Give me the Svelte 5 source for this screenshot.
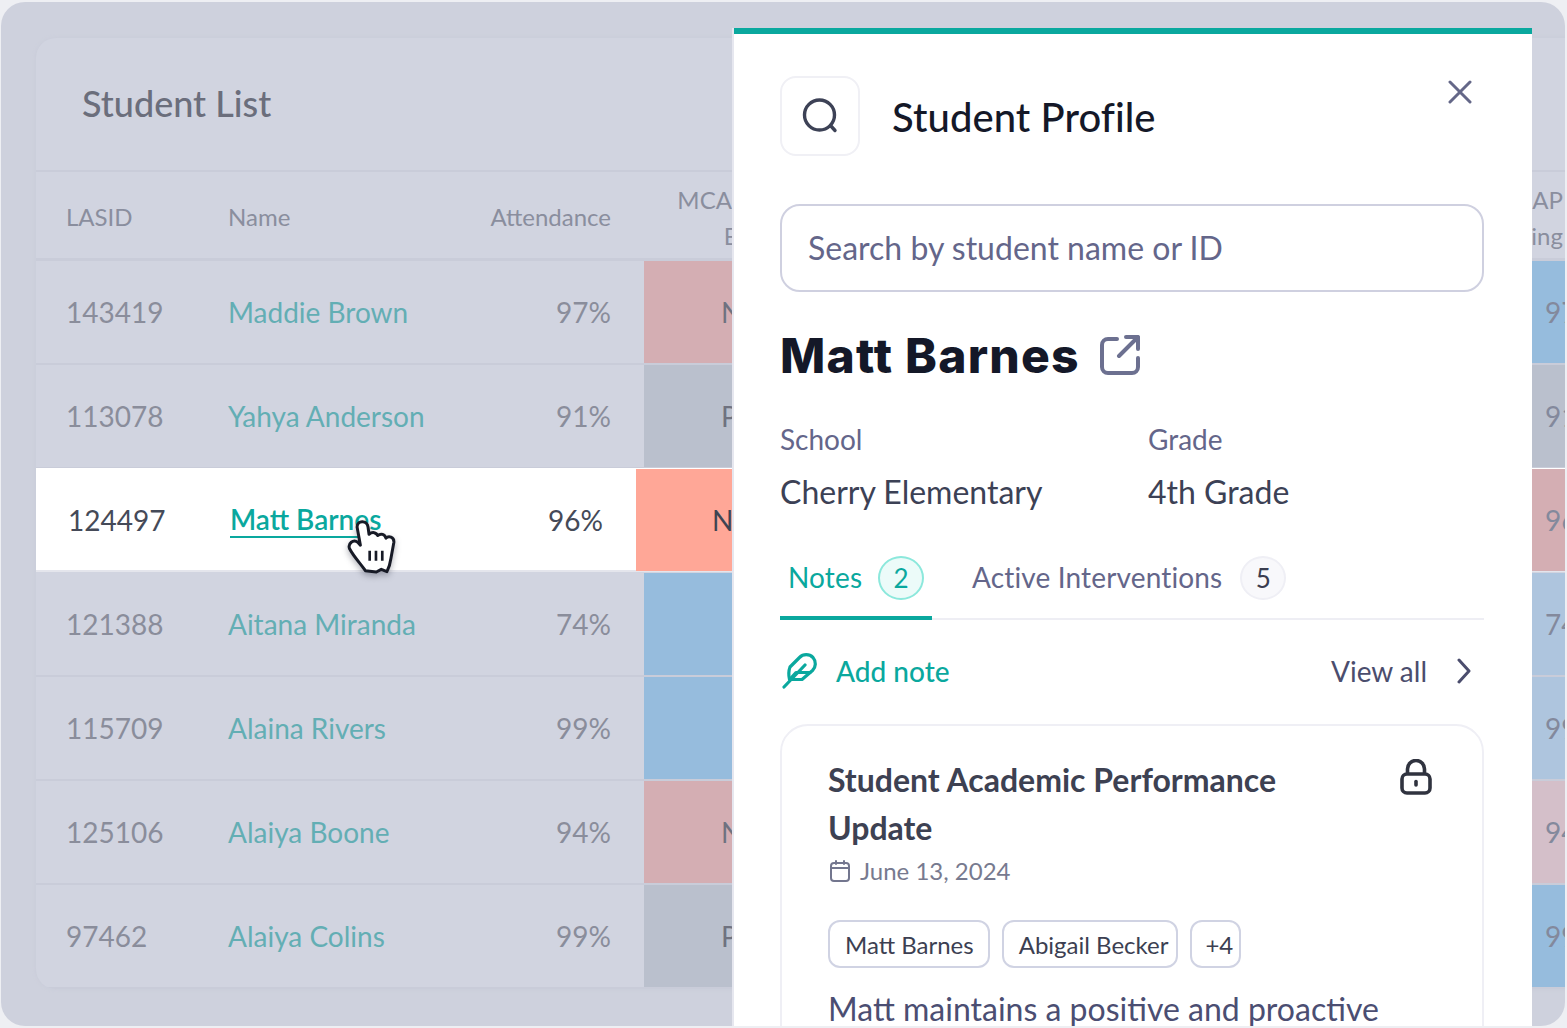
<script>
  const students = [
    { id: '143419', name: 'Maddie Brown', att: '97%', mark: 'NM', tone: 'red', score: '97', end: 'blue' },
    { id: '113078', name: 'Yahya Anderson', att: '91%', mark: 'PM', tone: 'grey', score: '91', end: 'grey' },
    { id: '124497', name: 'Matt Barnes', att: '96%', mark: 'NM', tone: 'hot', score: '96', end: 'red', active: true },
    { id: '121388', name: 'Aitana Miranda', att: '74%', mark: '', tone: 'blue', score: '74', end: 'pale' },
    { id: '115709', name: 'Alaina Rivers', att: '99%', mark: '', tone: 'blue', score: '99', end: 'pale' },
    { id: '125106', name: 'Alaiya Boone', att: '94%', mark: 'NM', tone: 'red', score: '94', end: 'pink' },
    { id: '97462', name: 'Alaiya Colins', att: '99%', mark: 'PM', tone: 'grey', score: '99', end: 'blue' }
  ];
</script>

<div class="frame">
  <div class="window">
    <section class="card">
      <h2 class="card-title">Student List</h2>
      <div class="row head">
        <div>LASID</div>
        <div>Name</div>
        <div class="num">Attendance</div>
        <div class="head-mca">MCA Results<br />ELA</div>
        <div class="head-map">MAP<br />Reading</div>
      </div>
      {#each students as s (s.id)}
        <div class="row" class:active={s.active}>
          <div>{s.id}</div>
          <div><span class="name">{s.name}</span></div>
          <div class="num">{s.att}</div>
          <div class="mark {s.tone}">{s.mark}</div>
          <div class="score {s.end}">{s.score}</div>
        </div>
      {/each}
    </section>

    <svg class="cursor" viewBox="440 170 150 175" width="50" height="58">
      <path d="M470 200C470 180 500 178 503 200L506 222C516 214 528 216 532 226C542 218 554 222 557 234C565 226 582 230 581 246L572 295C570 310 565 325 560 335L543 328L528 336L495 332C480 310 460 290 447 265C442 250 458 236 472 246L480 255Z" fill="#fff" stroke="#171a26" stroke-width="9" stroke-linejoin="round" />
      <path d="M508 272V302M527 272V302M546 272V302" fill="none" stroke="#171a26" stroke-width="8" />
    </svg>

    <aside class="modal">
      <header class="modal-head">
        <div class="icon-box">
          <svg viewBox="0 0 40 40" width="40" height="40" fill="none" stroke="#3d4256" stroke-width="3.4" stroke-linecap="round">
            <circle cx="19.5" cy="19" r="15" />
            <path d="M30.5 29.5L35 34.5" />
          </svg>
        </div>
        <h1>Student Profile</h1>
        <svg class="close" viewBox="0 0 24 24" width="24" height="24" fill="none" stroke="#646788" stroke-width="3" stroke-linecap="round">
          <path d="M2 2L22 22M22 2L2 22" />
        </svg>
      </header>

      <div class="search">Search by student name or ID</div>

      <div class="person">
        <span class="person-name">Matt Barnes</span>
        <svg viewBox="0 0 40 40" width="40" height="40" fill="none" stroke="#6c7090" stroke-width="4" stroke-linecap="round" stroke-linejoin="round">
          <path d="M17 4H8a6 6 0 0 0-6 6V32a6 6 0 0 0 6 6H32a6 6 0 0 0 6-6V23" />
          <path d="M19 21L38 2M26 2H38V14" />
        </svg>
      </div>

      <dl class="facts">
        <div><dt>School</dt><dd>Cherry Elementary</dd></div>
        <div><dt>Grade</dt><dd>4th Grade</dd></div>
      </dl>

      <div class="tabs">
        <div class="tab on">Notes <span class="badge">2</span></div>
        <div class="tab">Active Interventions <span class="badge">5</span></div>
      </div>

      <div class="actions">
        <div class="add">
          <svg viewBox="0 0 36 36" width="36" height="36" fill="none" stroke="#0aa89e" stroke-width="3.2" stroke-linecap="round" stroke-linejoin="round">
            <path d="M31 4.500a9.500 9.500 0 0 0-13.500 0L8 14c-1.500 4-1.500 8-.5 12.500H20l10.500-9a9.500 9.500 0 0 0 .5-13z" />
            <path d="M2 34L23 12M9 25L14 19.500H28" />
          </svg>
          Add note
        </div>
        <div class="view">
          View all
          <svg viewBox="0 0 14 26" width="14" height="26" fill="none" stroke="#4b4d6d" stroke-width="3" stroke-linecap="round" stroke-linejoin="round">
            <path d="M2 2L12 13L2 24" />
          </svg>
        </div>
      </div>

      <article class="note">
        <div class="note-top">
          <h3>Student Academic Performance Update</h3>
          <svg viewBox="0 0 32 36" width="32" height="36" fill="none" stroke="#30333f" stroke-width="3.600">
            <rect x="2" y="15" width="28" height="19" rx="5" />
            <path d="M7.500 15V10a8.500 8.500 0 0 1 17 0V15" />
            <path d="M16 22.500V26" stroke-linecap="round" />
          </svg>
        </div>
        <div class="date">
          <svg viewBox="0 0 20 22" width="20" height="22" fill="none" stroke="#73768e" stroke-width="2" stroke-linecap="round">
            <rect x="1" y="3" width="18" height="18" rx="3" />
            <path d="M1 8H19M6 1V4M14 1V4" />
          </svg>
          June 13, 2024
        </div>
        <div class="chips">
          <span class="chip">Matt Barnes</span>
          <span class="chip tight">Abigail Becker</span>
          <span class="chip more">+4</span>
        </div>
        <p>Matt maintains a positive and proactive</p>
      </article>
    </aside>
  </div>
</div>

<style>
  :global(body) {
    margin: 0;
    background: #eeeff3;
    font-family: Lato, "Liberation Sans", sans-serif;
    overflow: hidden;
  }

  .frame {
    box-sizing: border-box;
    width: 1567px;
    height: 1028px;
    padding: 2px 2px 2px 1px;
    background: #eeeff3;
  }

  .window {
    position: relative;
    height: 1024px;
    overflow: hidden;
    border-radius: 24px;
    background: #ced1dd;
  }

  .card {
    width: 1600px;
    margin: 36px 0 0 35px;
    border-radius: 20px;
    background: #d1d4e0;
    box-shadow: 0 0 4px #c8cbd8;
    overflow: hidden;
  }

  .card-title {
    box-sizing: border-box;
    height: 134px;
    margin: 0;
    padding: 43px 46px 0;
    font-size: 36px;
    line-height: 44px;
    font-weight: 500;
    color: #6b6e7c;
    border-bottom: 2px solid #c9ccd9;
  }

  .row {
    display: grid;
    grid-template-columns: 162px 222px 161px 921px 91px;
    align-items: center;
    box-sizing: border-box;
    height: 104px;
    padding-left: 30px;
    font-size: 28px;
    color: #8a8d9b;
    border-bottom: 2px solid #c9ccd9;
  }

  .row > div {
    white-space: nowrap;
  }

  .head {
    height: 89px;
    padding-top: 2px;
    font-size: 24px;
    color: #8a8e9e;
    border-bottom-width: 3px;
  }

  .num {
    text-align: right;
  }

  .head-mca {
    width: 202px;
    margin: 4px 0 0 33px;
    text-align: center;
    line-height: 36px;
  }

  .head-map {
    margin: 4px 60px 0 -60px;
    text-align: right;
    line-height: 36px;
  }

  .name {
    color: #63aeb4;
  }

  .mark,
  .score {
    display: flex;
    align-items: center;
    height: 102px;
    margin-left: 33px;
    padding-left: 77px;
    color: #6f7280;
  }

  .score {
    box-sizing: border-box;
    width: 34px;
    margin-left: 0;
    padding-left: 13px;
    overflow: hidden;
    color: #83899c;
  }

  .red { background: #d4aeb3; }
  .grey { background: #bac0cd; }
  .blue { background: #96bcdd; }
  .pale { background: #aec5de; }
  .pink { background: #d4bfc9; }
  .hot { background: #ffa797; }

  .row.active {
    grid-template-columns: 162px 223px 150px 929px 91px;
    margin: -1px 0 1px;
    padding: 1px 0 0 32px;
    background: #fff;
    color: #454a58;
    border-bottom-color: #e4e5ec;
  }

  .active .mark {
    color: #3f4452;
    padding-left: 76px;
  }

  .active .score {
    color: #83899c;
  }

  .active .name {
    display: inline-block;
    padding-bottom: 1px;
    font-weight: 600;
    color: #0aa89e;
    line-height: 32px;
    border-bottom: 2px solid #0aa89e;
  }

  .cursor {
    position: absolute;
    left: 346px;
    top: 515px;
    filter: drop-shadow(0 3px 3px rgba(40, 44, 60, 0.35));
  }

  .modal {
    position: absolute;
    left: 733px;
    top: 26px;
    box-sizing: border-box;
    width: 798px;
    height: 1010px;
    padding: 42px 48px 0 46px;
    background: #fff;
    border-top: 6px solid #0aa89e;
    box-shadow: -2px 0 0 #e6e7ef;
    color: #3c4155;
  }

  .modal-head {
    display: flex;
    align-items: center;
    gap: 32px;
    position: relative;
  }

  .icon-box {
    display: flex;
    align-items: center;
    justify-content: center;
    box-sizing: border-box;
    width: 80px;
    height: 80px;
    border: 2px solid #f0f0f5;
    border-radius: 16px;
  }

  .modal-head h1 {
    margin: 2px 0 0;
    font-size: 40px;
    font-weight: 500;
    letter-spacing: 0.06px;
    color: #141828;
  }

  .close {
    position: absolute;
    right: 12px;
    top: 4px;
  }

  .search {
    box-sizing: border-box;
    height: 88px;
    margin-top: 48px;
    padding: 0 26px;
    border: 2px solid #cfd0e0;
    border-radius: 20px;
    font-size: 32px;
    line-height: 84px;
    color: #64668a;
  }

  .person {
    display: flex;
    align-items: center;
    gap: 22px;
    margin-top: 32px;
    height: 62px;
  }

  .person-name {
    font-family: Inter, "Liberation Sans", sans-serif;
    font-size: 48px;
    font-weight: 800;
    color: #141828;
    letter-spacing: 1.25px;
  }

  .person svg {
    margin-left: -2px;
  }

  .facts {
    display: grid;
    grid-template-columns: 368px 1fr;
    margin: 35px 0 0;
  }

  .facts dt {
    font-size: 28px;
    line-height: 36px;
    color: #64668a;
  }

  .facts dd {
    margin: 16px 0 0;
    font-size: 32px;
    line-height: 38px;
    color: #3c4155;
  }

  .tabs {
    display: flex;
    gap: 40px;
    margin-top: 45px;
    height: 62px;
    border-bottom: 2px solid #eeeef4;
  }

  .tab {
    display: flex;
    align-items: flex-start;
    gap: 18px;
    height: 64px;
    font-size: 28px;
    line-height: 42px;
    letter-spacing: 0.15px;
    color: #64668a;
  }

  .tab.on {
    box-sizing: border-box;
    width: 152px;
    padding-left: 8px;
    gap: 16px;
    color: #0aa89e;
    border-bottom: 4px solid #0aa89e;
  }

  .badge {
    box-sizing: border-box;
    width: 46px;
    height: 44px;
    border: 2px solid #efeff5;
    border-radius: 50%;
    background: #f8f8fb;
    font-size: 26px;
    line-height: 41px;
    text-align: center;
    color: #3a3d50;
  }

  .on .badge {
    border-color: #8ce8dc;
    background: #ecfbf9;
    color: #0aa89e;
  }

  .actions {
    display: flex;
    justify-content: space-between;
    align-items: center;
    height: 36px;
    margin-top: 33px;
    font-size: 28px;
  }

  .add {
    display: flex;
    align-items: center;
    gap: 18px;
    padding-left: 2px;
    color: #0aa89e;
    font-weight: 500;
  }

  .view {
    display: flex;
    align-items: center;
    gap: 30px;
    padding-right: 13px;
    color: #4b4d6d;
  }

  .note {
    height: 400px;
    margin-top: 35px;
    padding: 30px 46px;
    border: 2px solid #efeff5;
    border-radius: 28px;
  }

  .note-top {
    display: flex;
    justify-content: space-between;
    align-items: flex-start;
  }

  .note-top h3 {
    width: 480px;
    margin: 0;
    font-size: 32px;
    line-height: 48px;
    font-weight: 700;
    color: #3d4152;
  }

  .note-top svg {
    margin: 3px 4px 0 0;
  }

  .date {
    display: flex;
    align-items: center;
    gap: 10px;
    margin-top: 2px;
    padding-left: 2px;
    font-size: 24px;
    line-height: 34px;
    color: #777a8f;
  }

  .chips {
    display: flex;
    gap: 12px;
    margin-top: 32px;
  }

  .chip {
    box-sizing: border-box;
    height: 48px;
    padding: 0 14px 0 15px;
    border: 2px solid #d0d3e3;
    border-radius: 12px;
    font-size: 24px;
    line-height: 46px;
    color: #3c3f52;
  }

  .chip.tight {
    padding-right: 8px;
  }

  .chip.more {
    padding: 0 6px 0 13px;
  }

  .note p {
    margin: 19px 0 0;
    font-size: 32px;
    line-height: 44px;
    color: #4b4e72;
    white-space: nowrap;
  }
</style>
